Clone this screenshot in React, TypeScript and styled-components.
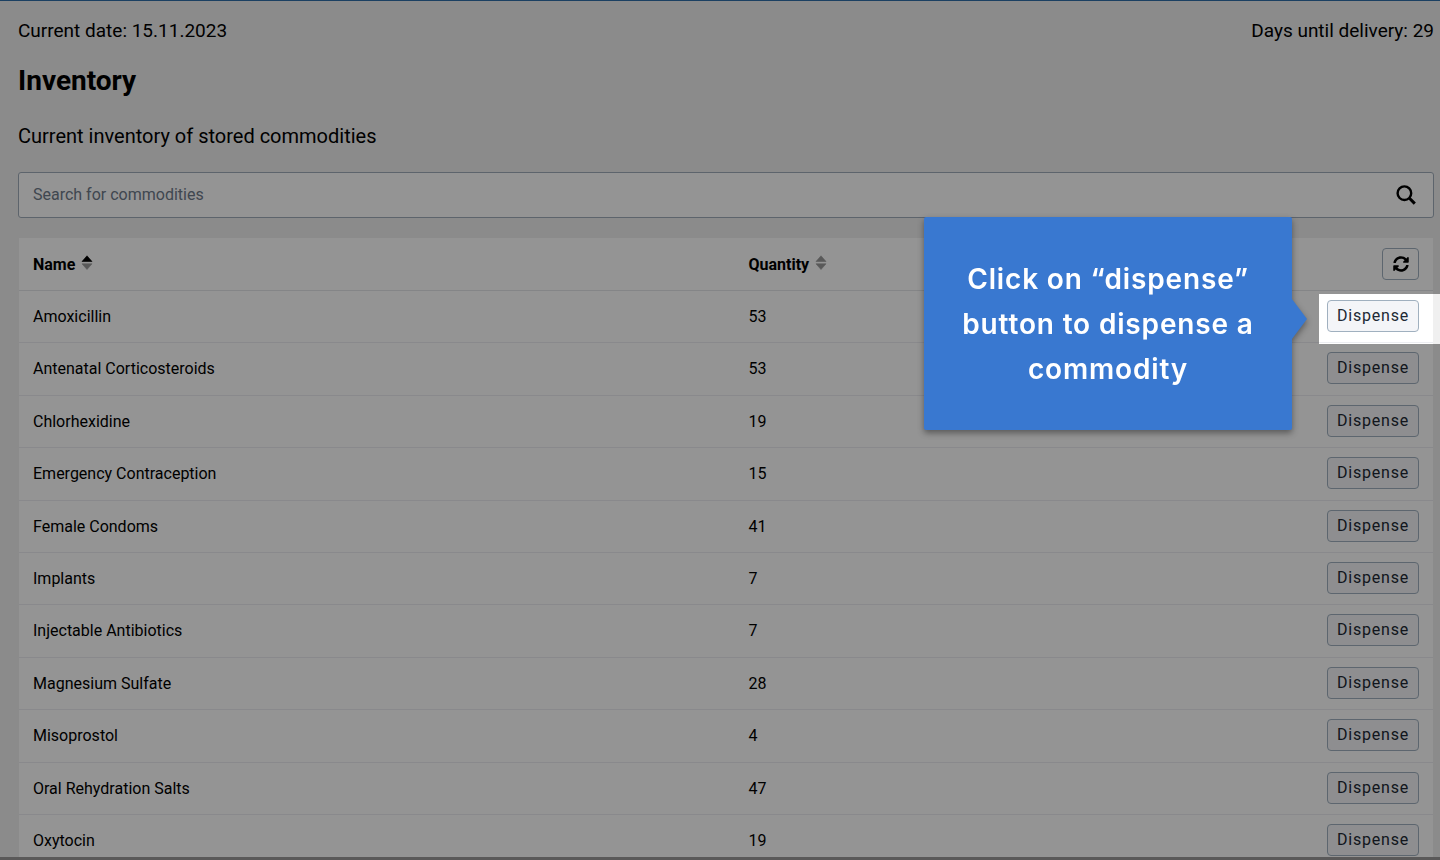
import React from "react";
import styled, { createGlobalStyle } from "styled-components";

const GlobalStyle = createGlobalStyle`
  *, *::before, *::after { box-sizing: border-box; }
  body {
    margin: 0;
    background: #ededed;
    color: #000;
    font-family: Roboto, "Liberation Sans", sans-serif;
    font-size: 16px;
    line-height: 24px;
  }
`;

const Shell = styled.div`
  display: flex;
  flex-direction: column;
  height: 100vh;
`;

const Page = styled.main`
  flex: 1;
  min-height: 0;
  overflow: hidden;
  padding: 18px 6px 0 18px;
  background: #f0f0f0;
  border-top: 1px solid #1b4062;
`;

const BottomEdge = styled.footer`
  height: 3px;
  background: #5a5959;
`;

const StatusBar = styled.div`
  display: flex;
  justify-content: space-between;
  font-size: 19px;
`;

const Title = styled.h1`
  margin: 20px 0 0;
  font-size: 28px;
  line-height: 36px;
  font-weight: 700;
`;

const Subtitle = styled.p`
  margin: 25px 0 24px;
  font-size: 20px;
`;

const SearchBox = styled.form`
  display: flex;
  align-items: center;
  height: 46px;
  margin-bottom: 20px;
  border: 1px solid #a0adba;
  border-radius: 3px;
  background: #fff;
`;

const SearchInput = styled.input`
  flex: 1;
  height: 100%;
  padding: 0 14px 2px;
  border: 0;
  outline: 0;
  background: transparent;
  color: #212934;
  font: inherit;
  &::placeholder { color: #6e7a8a; opacity: 1; }
`;

const SearchButton = styled.button`
  display: flex;
  padding: 0 17px;
  border: 0;
  background: transparent;
  color: #000;
`;

const Table = styled.table`
  width: calc(100% - 2px);
  margin: 0 1px;
  table-layout: fixed;
  border-collapse: separate;
  border-spacing: 0;
  background: #fff;
`;

const Row = styled.tr`
  height: 52px;
  &:nth-child(5n + 2), &:nth-child(5n + 4) { height: 53px; }
`;

const HeadRow = styled.tr`
  height: 53px;
`;

const HeadCell = styled.th<{ $width?: string; $end?: boolean }>`
  width: ${(p) => p.$width ?? "auto"};
  padding: 0 14px;
  border-bottom: 1px solid #e4e5e9;
  text-align: ${(p) => (p.$end ? "right" : "left")};
  font-weight: 700;
`;

const Cell = styled.td<{ $end?: boolean }>`
  position: relative;
  padding: ${(p) => (p.$end ? "0 14px 2px" : "0 14px")};
  border-bottom: 1px solid #ecedf1;
  text-align: ${(p) => (p.$end ? "right" : "left")};
`;

const SortButton = styled.button`
  display: flex;
  align-items: flex-start;
  gap: 6px;
  padding: 1px 0 0;
  border: 0;
  background: transparent;
  color: inherit;
  font: inherit;
`;

const SortMark = styled.svg`
  margin-top: 2px;
`;

const ActionButton = styled.button<{ $icon?: boolean }>`
  display: inline-flex;
  align-items: center;
  justify-content: center;
  width: ${(p) => (p.$icon ? 37 : 92)}px;
  height: 32px;
  padding: 0;
  border: 1px solid #a0b0bf;
  border-radius: 4px;
  background: ${(p) => (p.$icon ? "#fff" : "#f4f5f8")};
  color: ${(p) => (p.$icon ? "#000" : "#212934")};
  font: inherit;
  letter-spacing: 0.05em;
  vertical-align: middle;
`;

const Spotlight = styled.div`
  position: absolute;
  z-index: 1;
  top: 3px;
  right: -7px;
  width: 121px;
  height: 50px;
  box-shadow: 0 0 0 9999px rgba(0, 0, 0, 0.42);
  pointer-events: none;
`;

const Hint = styled.div`
  position: absolute;
  z-index: 2;
  top: -74px;
  right: 141px;
  width: 368px;
  padding: 40px 32px 38px;
  border-radius: 2px;
  background: #3978d0;
  color: #fff;
  filter: drop-shadow(0 3px 3px rgba(0, 0, 0, 0.4));
  font-family: Inter, sans-serif;
  font-size: 28px;
  font-weight: 600;
  line-height: 45px;
  letter-spacing: 0.03em;
  text-align: center;
  &::after {
    content: "";
    position: absolute;
    top: 82px;
    left: 100%;
    border: solid transparent;
    border-width: 20px 0 20px 15px;
    border-left-color: #3978d0;
  }
`;

function SortIcon({ active }: { active?: boolean }) {
  const up = active ? "#000" : "#9a9a9a";
  return (
    <SortMark width="12" height="16" viewBox="0 0 12 16" aria-hidden="true">
      <path d="M1 6.5 6 .8l5 5.7Z" fill={up} stroke={up} strokeWidth=".6" strokeLinejoin="round" />
      <path d="M1 8.8h10L6 14.5Z" fill="#9a9a9a" stroke="#9a9a9a" strokeWidth=".6" strokeLinejoin="round" />
    </SortMark>
  );
}

function RefreshIcon() {
  return (
    <svg width="16" height="16" viewBox="0 0 512 512" aria-hidden="true" fill="currentColor">
      <path d="M370.72 133.28C339.458 104.008 298.888 87.962 255.848 88c-77.458.068-144.328 53.178-162.791 126.85-1.344 5.363-6.122 9.15-11.651 9.15H24.103c-7.498 0-13.194-6.807-11.807-14.176C33.933 94.924 134.813 8 256 8c66.448 0 126.791 26.136 171.315 68.685L463.03 40.97C478.149 25.851 504 36.559 504 57.941V192c0 13.255-10.745 24-24 24H345.941c-21.382 0-32.09-25.851-16.971-40.971l41.75-41.749zM32 296h134.059c21.382 0 32.09 25.851 16.971 40.971l-41.75 41.75c31.262 29.273 71.835 45.319 114.876 45.28 77.418-.07 144.315-53.144 162.787-126.849 1.344-5.363 6.122-9.15 11.651-9.15h57.304c7.498 0 13.194 6.807 11.807 14.176C478.067 417.076 377.187 504 256 504c-66.448 0-126.791-26.136-171.315-68.685L48.97 471.03C33.851 486.149 8 475.441 8 454.059V320c0-13.255 10.745-24 24-24z" />
    </svg>
  );
}

const commodities: [string, number][] = [
  ["Amoxicillin", 53],
  ["Antenatal Corticosteroids", 53],
  ["Chlorhexidine", 19],
  ["Emergency Contraception", 15],
  ["Female Condoms", 41],
  ["Implants", 7],
  ["Injectable Antibiotics", 7],
  ["Magnesium Sulfate", 28],
  ["Misoprostol", 4],
  ["Oral Rehydration Salts", 47],
  ["Oxytocin", 19],
];

export default function App() {
  return (
    <Shell>
      <GlobalStyle />
      <Page>
        <StatusBar>
          <span>Current date: 15.11.2023</span>
          <span>Days until delivery: 29</span>
        </StatusBar>
        <Title>Inventory</Title>
        <Subtitle>Current inventory of stored commodities</Subtitle>
        <SearchBox role="search" onSubmit={(e) => e.preventDefault()}>
          <SearchInput type="text" aria-label="Search for commodities" placeholder="Search for commodities" />
          <SearchButton type="submit" aria-label="Search">
            <svg width="20" height="20" viewBox="0 0 20 20" fill="none" stroke="currentColor" strokeWidth="2.4" aria-hidden="true">
              <circle cx="8.4" cy="8.2" r="6.8" />
              <path d="m13.2 13 5.6 5.6" strokeWidth="3" />
            </svg>
          </SearchButton>
        </SearchBox>
        <Table>
          <thead>
            <HeadRow>
              <HeadCell $width="50.6%" scope="col">
                <SortButton type="button">Name <SortIcon active /></SortButton>
              </HeadCell>
              <HeadCell scope="col">
                <SortButton type="button">Quantity <SortIcon /></SortButton>
              </HeadCell>
              <HeadCell $end scope="col">
                <ActionButton $icon type="button" aria-label="Refresh"><RefreshIcon /></ActionButton>
              </HeadCell>
            </HeadRow>
          </thead>
          <tbody>
            {commodities.map(([name, quantity], index) => (
              <Row key={name}>
                <Cell>{name}</Cell>
                <Cell>{quantity}</Cell>
                <Cell $end>
                  <ActionButton type="button">Dispense</ActionButton>
                  {index === 0 && (
                    <>
                      <Spotlight />
                      <Hint role="tooltip">Click on “dispense” button to dispense a commodity</Hint>
                    </>
                  )}
                </Cell>
              </Row>
            ))}
          </tbody>
        </Table>
      </Page>
      <BottomEdge />
    </Shell>
  );
}
